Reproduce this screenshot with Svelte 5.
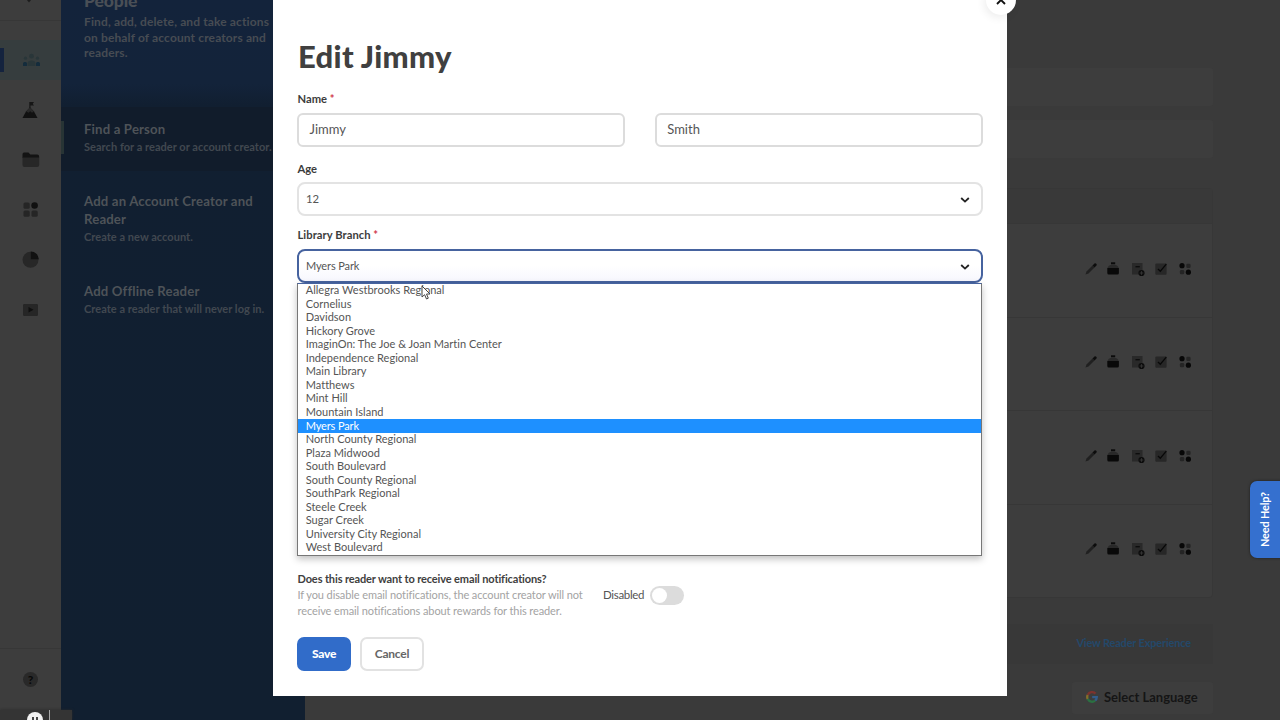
<script>
  const branches = [
    'Allegra Westbrooks Regional', 'Cornelius', 'Davidson', 'Hickory Grove',
    'ImaginOn: The Joe & Joan Martin Center', 'Independence Regional', 'Main Library',
    'Matthews', 'Mint Hill', 'Mountain Island', 'Myers Park', 'North County Regional',
    'Plaza Midwood', 'South Boulevard', 'South County Regional', 'SouthPark Regional',
    'Steele Creek', 'Sugar Creek', 'University City Regional', 'West Boulevard'
  ];
  const selected = 'Myers Park';
  const nav = ['people', 'goals', 'folder', 'apps', 'reports', 'media'];
  const rows = [1, 2, 3, 4];
</script>

{#snippet chevron()}
  <svg class="chev" width="10" height="8" viewBox="0 0 10 8"><path d="M1.2 2 L5 5.6 L8.8 2" fill="none" stroke="#222" stroke-width="1.8" /></svg>
{/snippet}

{#snippet navIcon(name)}
  <svg width="20" height="20" viewBox="0 0 20 20">
    {#if name === 'people'}
      <g fill="#293639"><circle cx="3.5" cy="8.2" r="1.6" /><circle cx="9.500" cy="6.2" r="2.4" /><circle cx="15.500" cy="8.2" r="1.6" /><path d="M5.500 16 v-2.5 q0-3 4-3 t4 3 V16z" /></g>
      <g fill="#142c3c"><path d="M1 16v-2.500q0-1.500 1.500-1.500h1.500l1 1v3zM18 16v-2.500q0-1.500-1.500-1.500h-1.500l-1 1v3z" /></g>
    {:else if name === 'goals'}
      <path d="M2.500 18 6 11.500 10 7.500 14 11.500 17.500 18z" fill="#111" /><path d="M6.300 11.500 10 7 13.700 11.500 12 12.700 10.300 11.300 8.500 12.700z" fill="#292929" /><path d="M9.300 8V2h4.700l-1.200 1.700L14 5.400h-3.500v3z" fill="#161616" />
    {:else if name === 'folder'}
      <path d="M2.500 8V4.500Q2.500 2.500 4 2.500h4.500l1.800 2h7q1.800 0 1.800 1.800V8z" fill="#131313" /><path d="M2.500 7.500h16.700V15q0 2-2 2H4.500q-2 0-2-2z" fill="#272727" />
    {:else if name === 'apps'}
      <g fill="#252525"><rect x="3.500" y="2.500" width="6.200" height="6.200" rx="1.500" /><rect x="3.500" y="10.500" width="6.200" height="6.200" rx="1.500" /><rect x="11.500" y="10.500" width="6.200" height="6.200" rx="1.500" /></g><circle cx="14.600" cy="5.500" r="3.300" fill="#101010" />
    {:else if name === 'reports'}
      <circle cx="10.500" cy="9.800" r="8" fill="#272727" /><path d="M10.800 9.300V1.500a8 8 0 0 1 8 7.800z" fill="#111" />
    {:else}
      <rect x="3" y="4" width="15" height="12" rx="1.200" fill="#262626" /><path d="M8.500 7v5.600l5-2.800z" fill="#0f0f0f" />
    {/if}
  </svg>
{/snippet}

<div class="page">
  <nav class="rail">
    <div class="rail-head"><svg width="6" height="3" viewBox="0 0 6 3"><path d="M1 0h4L3 2.500z" fill="#1c1c1c" /></svg></div>
    <div class="rail-items">
      {#each nav as n}
        <div class="rail-item" class:active={n === 'people'}>{@render navIcon(n)}</div>
      {/each}
    </div>
    <div class="rail-help"><span>?</span></div>
  </nav>

  <aside class="panel">
    <header>
      <h2>People</h2>
      <p>Find, add, delete, and take actions<br />on behalf of account creators and<br />readers.</p>
    </header>
    <section class="link current"><h3>Find a Person</h3><p>Search for a reader or account creator.</p></section>
    <section class="link second"><h3>Add an Account Creator and<br />Reader</h3><p>Create a new account.</p></section>
    <section class="link third"><h3>Add Offline Reader</h3><p>Create a reader that will never log in.</p></section>
  </aside>

  <main class="content">
    <div class="bar first"></div>
    <div class="bar"></div>
    <div class="table">
      <div class="thead"></div>
      {#each rows as r}
        <div class="trow">
          <svg width="14" height="16" viewBox="0 0 14 16"><path d="M1.500 13.500 2.500 10.500 8.500 4.500 10.500 6.500 4.500 12.500z" fill="#202020" /><path d="M8.500 4.500 10.500 2.500q1-.6 1.800.2t.2 1.800L10.500 6.500z" fill="#0c0c0c" /></svg>
          <svg width="14" height="16" viewBox="0 0 14 16"><path d="M5 1.300h4.200v2H5z" fill="#0b0b0b" /><path d="M1.500 7Q2.500 4 5 4h4.200q2.500 0 3.500 3z" fill="#292929" /><path d="M1.300 7h11.600v5q0 1.500-1.500 1.500H2.800q-1.500 0-1.500-1.500z" fill="#090909" /></svg>
          <svg width="14" height="16" viewBox="0 0 14 16"><path d="M1 2h10.500v11.500H1z" fill="#292929" /><path d="M4.500 5h4.300v1.400H4.500z" fill="#0d0d0d" /><circle cx="10.500" cy="12" r="3.100" fill="#0c0c0c" /><path d="M10.500 10.200v3.600M8.700 12h3.600" stroke="#333" stroke-width="1" /></svg>
          <svg width="14" height="16" viewBox="0 0 14 16"><rect x="1.300" y="2.500" width="11.300" height="11.300" rx="1" fill="#272727" /><path d="M4 8 6.300 10.200 12.300 3.200" fill="none" stroke="#080808" stroke-width="1.300" /></svg>
          <svg width="14" height="16" viewBox="0 0 14 16"><circle cx="4" cy="4.700" r="2.600" fill="#070707" /><circle cx="10.400" cy="11.200" r="2.600" fill="#070707" /><rect x="8.300" y="2.700" width="4.300" height="4.300" rx="1.300" fill="#252525" /><rect x="1.900" y="9" width="4.300" height="4.300" rx="1.300" fill="#252525" /></svg>
        </div>
      {/each}
    </div>
    <div class="experience"><span>View Reader Experience</span></div>
    <div class="language">
      <svg width="12" height="12" viewBox="0 0 12 12" fill="none" stroke-width="2.300">
        <path d="M9.500 2.600A4.800 4.800 0 0 0 1.700 3.900" stroke="#7c332e" /><path d="M1.700 3.900A4.800 4.800 0 0 0 1.700 8.100" stroke="#857029" /><path d="M1.700 8.100A4.800 4.800 0 0 0 9.200 9.500" stroke="#2b7042" /><path d="M9.200 9.500A4.800 4.800 0 0 0 10.800 6.100H6.200" stroke="#335d8c" />
      </svg>
      <span>Select Language</span>
    </div>
  </main>

  <div class="modal">
    <h1>Edit Jimmy</h1>
    <div class="label name">Name <i>*</i></div>
    <div class="names"><div class="field">Jimmy</div><div class="field">Smith</div></div>
    <div class="label age">Age</div>
    <div class="select"><span>12</span>{@render chevron()}</div>
    <div class="label branch">Library Branch <i>*</i></div>
    <div class="select open"><span>Myers Park</span>{@render chevron()}</div>
    <div class="notify">
      <div class="copy"><strong>Does this reader want to receive email notifications?</strong><p>If you disable email notifications, the account creator will not<br />receive email notifications about rewards for this reader.</p></div>
      <span class="state">Disabled</span>
      <div class="toggle"><b></b></div>
    </div>
    <div class="actions"><button class="save">Save</button><button class="cancel">Cancel</button></div>

    <div class="menu">
      {#each branches as b}<div class="option" class:chosen={b === selected}>{b}</div>{/each}
    </div>
    <div class="close"><svg width="10" height="10" viewBox="0 0 10 10"><path d="M1 1 9 9M9 1 1 9" stroke="#111" stroke-width="1.900" /></svg></div>
  </div>

  <div class="help">Need Help?</div>
  <div class="player"><div class="pause"><em></em><em></em></div><div class="tick"></div></div>
  <svg class="cursor" width="10" height="16" viewBox="0 0 10 16"><path d="M1 1V12L3.600 9.700 5.500 14 7.300 13.200 5.500 9H9z" fill="#fff" stroke="#444" stroke-width="1" /></svg>
</div>

<style>
  :global(body) { margin: 0; overflow: hidden; }
  .page { position: relative; width: 1280px; height: 720px; overflow: hidden; display: grid; grid-template-columns: 61px 244px 1fr; background: #3a3a3a; font-family: Lato, sans-serif; }
  .page * { box-sizing: border-box; }
  h1, h2, h3, p { margin: 0; }

  .rail { background: #3d3d3d; display: flex; flex-direction: column; height: 720px; }
  .rail-head { height: 21px; border-bottom: 1px solid #373737; display: flex; justify-content: center; padding-right: 3px; }
  .rail-items { display: flex; flex-direction: column; gap: 10px; padding-top: 19px; flex: 1; }
  .rail-item { height: 40px; display: flex; align-items: center; justify-content: center; padding-right: 1px; }
  .rail-item.active { padding-left: 4px; background: linear-gradient(#14233e, #14233e) 0 8px / 4px 24px no-repeat, #363d3e; }
  .rail-help { height: 72px; border-top: 1px solid #373737; padding: 23px 0 0 23px; }
  .rail-help span { display: block; width: 15px; height: 15px; border-radius: 50%; background: #292929; color: #090909; font: 900 12px/15px Lato, sans-serif; text-align: center; }

  .panel { height: 720px; overflow: hidden; background: linear-gradient(#13233b 0, #13233a 84px, #111f31 105px, #111f30 100%); color: #43484f; font-weight: 700; white-space: nowrap; }
  .panel header { height: 115px; padding-left: 23px; margin-top: -8px; }
  h2 { font: 900 17.500px/17px Lato, sans-serif; letter-spacing: -0.100px; color: #4a4f56; }
  .panel header p { font-size: 12px; line-height: 15.500px; letter-spacing: 0.130px; padding-top: 5px; color: #474c53; }
  .link { padding-left: 23px; }
  h3 { font-size: 13.200px; line-height: 18px; letter-spacing: 0.150px; color: #4e5358; font-weight: 700; }
  .link p { font-size: 11px; line-height: 18px; color: #414850; letter-spacing: 0.040px; }
  .current { height: 64px; padding-top: 13px; background: linear-gradient(#283435, #283435) 0 14px / 3px 33px no-repeat, #111c2b; }
  .second { padding-top: 21px; height: 90px; }
  .third { padding-top: 20.500px; }

  .content { padding-right: 67px; display: flex; flex-direction: column; height: 720px; }
  .bar { height: 38px; background: #3d3d3d; border-radius: 3px; margin-bottom: 14px; }
  .bar.first { margin-top: 68px; }
  .table { margin-top: 16px; height: 410px; border: 1px solid #373737; border-radius: 4px; background: #3d3d3d; display: flex; flex-direction: column; }
  .thead { height: 34px; background: #393939; }
  .trow { flex: 1; border-top: 1px solid #373737; display: flex; justify-content: flex-end; align-items: center; padding-right: 20px; padding-bottom: 3px; gap: 10px; }
  .trow svg:nth-child(1) { margin-right: -2px; }
  .trow svg:nth-child(3) { margin-left: 1px; margin-right: -1px; }
  .experience { margin-top: 26px; height: 40px; background: #383838; display: flex; align-items: center; justify-content: flex-end; padding: 0 22px 4px 0; font-size: 11px; font-weight: 700; letter-spacing: -0.180px; color: #24486a; }
  .language { align-self: flex-end; width: 141px; height: 32px; margin-top: 18px; border-radius: 3px; background: #3d3d3d; display: flex; align-items: center; gap: 6px; padding: 0 0 2px 14px; font-size: 13px; font-weight: 700; color: #151515; white-space: nowrap; }

  .modal { position: absolute; left: 273px; top: 0; width: 734px; height: 696px; background: #fff; padding: 37px 24.500px 0 24px; color: #404040; }
  h1 { font-size: 31px; line-height: 38px; height: 39px; font-weight: 900; letter-spacing: 0.300px; padding-left: 1px; }
  .label { font-size: 11.200px; line-height: 14px; font-weight: 700; padding-left: 0.500px; color: #3c3c3c; }
  .label i { font-style: normal; color: #d0384c; }
  .name { margin-top: 16px; }
  .names { display: grid; grid-template-columns: 1fr 1fr; gap: 30px; margin-top: 7px; }
  .field { height: 34px; border: 2px solid #dcdcdc; border-radius: 6px; padding: 0 10.500px; font-size: 13px; line-height: 29px; color: #555; }
  .age { margin-top: 15px; }
  .select { height: 34px; border: 2px solid #e3e3e3; border-radius: 8px; padding: 0 11px 2px 7px; margin-top: 6px; font-size: 11.300px; display: flex; align-items: center; justify-content: space-between; color: #555; }
  .select .chev { margin-top: 4px; }
  .branch { margin-top: 12px; letter-spacing: 0.050px; }
  .select.open { border-color: #46639f; margin-top: 7px; font-size: 11px; letter-spacing: -0.120px; background: linear-gradient(#fff 50%, #f7f7fe); }
  .menu { position: absolute; left: 24px; top: 283px; width: 685px; height: 273px; border: 1px solid #777; border-top-color: #46639f; background: #fff; box-shadow: 0 3px 7px rgba(0, 0, 0, 0.25); }
  .option { height: 13.550px; line-height: 12.400px; font-size: 11px; padding-left: 7.700px; color: #555; letter-spacing: 0.020px; white-space: nowrap; }
  .chosen { background: #1e90ff; color: #fff; letter-spacing: -0.120px; line-height: 13px; }
  .notify { margin-top: 288px; display: flex; white-space: nowrap; }
  .copy { width: 306px; padding-left: 0.500px; }
  .copy strong { display: block; font-size: 11px; line-height: 15px; letter-spacing: -0.120px; }
  .copy p { font-size: 11px; line-height: 16px; letter-spacing: -0.100px; padding-top: 1px; color: #a3a3a3; }
  .state { font-size: 11.500px; line-height: 16px; width: 47px; padding-top: 16px; letter-spacing: -0.320px; color: #555; }
  .toggle { width: 34px; height: 19px; border-radius: 10px; background: #dcdcdc; margin-top: 15px; padding: 2px; }
  .toggle b { display: block; width: 15px; height: 15px; border-radius: 50%; background: #fff; }
  .actions { display: flex; gap: 9px; margin-top: 18px; }
  button { height: 34px; border-radius: 7px; font: 700 12px/30px Lato, sans-serif; letter-spacing: -0.250px; padding: 0; }
  .save { width: 54px; border: 0; background: #316cc9; color: #fff; font-weight: 900; }
  .cancel { width: 64px; background: #fff; border: 2px solid #e2e2e2; color: #666; }
  .close { position: absolute; left: 713px; top: -15px; width: 30px; height: 30px; border-radius: 50%; background: #fff; display: flex; align-items: center; justify-content: center; box-shadow: -2px 3px 8px rgba(0, 0, 0, 0.07); }

  .help { position: absolute; left: 1250px; top: 481px; width: 36px; height: 77px; border-radius: 0 7px 7px 0; background: #3570cf; box-shadow: 0 0 3px rgba(0, 0, 0, 0.5); color: #fff; font-size: 11px; font-weight: 700; letter-spacing: -0.200px; line-height: 30px; writing-mode: vertical-rl; transform: rotate(180deg); text-align: center; padding-left: 6px; }
  .player { position: absolute; left: 0; top: 710px; width: 72px; height: 10px; background: #343434; box-shadow: 0 0 3px #292929; overflow: hidden; }
  .pause { position: absolute; left: 27px; top: 2px; width: 16px; height: 16px; border-radius: 50%; background: #f2f2f2; display: flex; gap: 2px; justify-content: center; padding-top: 5px; }
  .pause em { width: 2px; height: 6px; background: #444; }
  .tick { position: absolute; left: 49px; top: 0; width: 1px; height: 10px; background: #aaa; }
  .cursor { position: absolute; left: 421px; top: 285px; }
</style>
